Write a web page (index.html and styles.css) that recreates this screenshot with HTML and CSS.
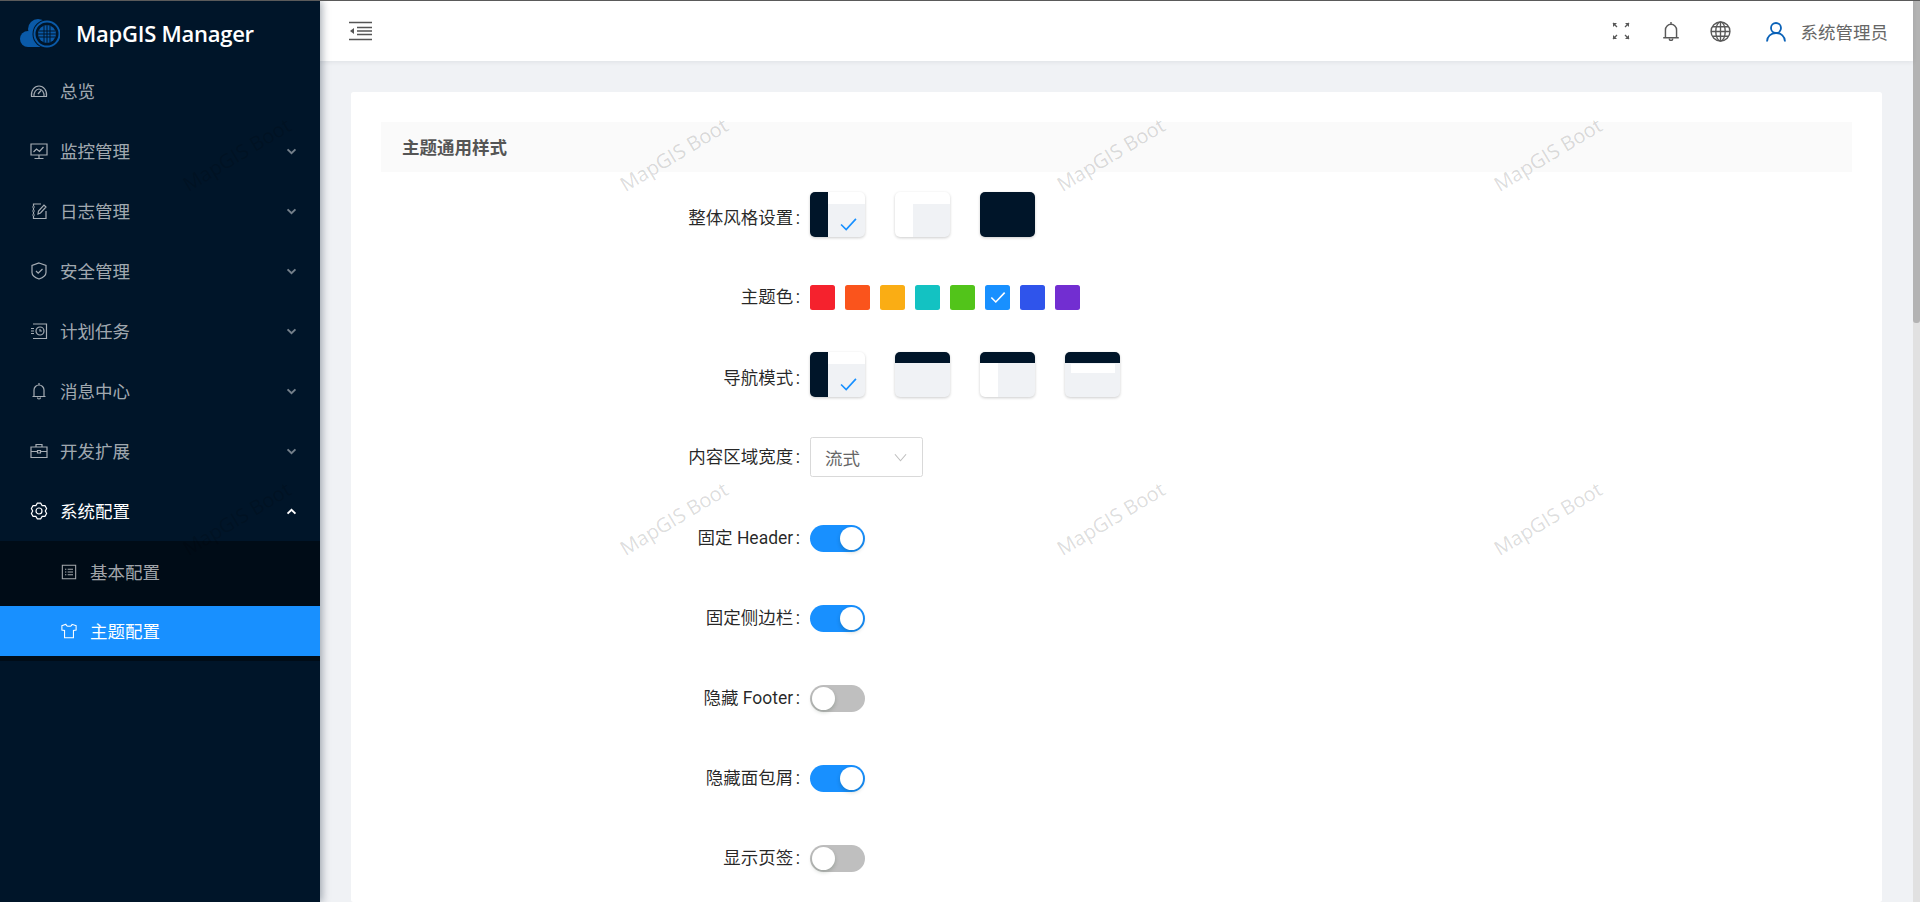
FILE: index.html
```html
<!DOCTYPE html>
<html lang="en">
<head>
    <meta charset="UTF-8">
    <meta name="viewport" content="width=device-width, initial-scale=1.0">
    <title>主题配置</title>
    <link rel="stylesheet" href="styles.css">
</head>
<body>
    <aside class="sidebar">
        <div class="logo">
            <svg class="logo-mark" viewBox="0 0 40 30">
                <circle cx="8" cy="20" r="8" fill="#0a5aa8"/>
                <circle cx="18" cy="10" r="10" fill="#0a5aa8"/>
                <rect x="8" y="14" width="20" height="14" fill="#0a5aa8"/>
                <circle cx="27" cy="15" r="14.5" fill="#001529"/>
                <circle cx="27" cy="15" r="12.5" fill="none" stroke="#0a5aa8" stroke-width="2"/>
                <circle cx="27" cy="15" r="9" fill="#0a5aa8"/>
                <path d="M18.5 12h17M18.5 18h17M24 6.500v17M30 6.500v17M27 6v18M18 15h18" stroke="#001529" stroke-width="1" fill="none"/>
            </svg>
            <span class="logo-text">MapGIS Manager</span>
        </div>
        <ul class="menu">
            <li class="menu-item">
                <svg class="icon" viewBox="0 0 18 18"><path d="M1.500 14.500C.6 8.500 4.500 4 9 4s8.400 4.500 7.500 10.500zM4 14.500C3.600 10.500 6 7 9 7s5.400 3.500 5 7.500M8 12l3-3.500"/></svg>
                <span>总览</span>
            </li>
            <li class="menu-item">
                <svg class="icon" viewBox="0 0 18 18"><path d="M1 2h16v11H1zM9 13v3.500M4.500 16.500h9M3.500 10l3-3 3 2.500 4-4.500"/></svg>
                <span>监控管理</span>
                <svg class="arrow" viewBox="0 0 12 8"><path d="M1.500 1.500 6 6l4.500-4.500"/></svg>
            </li>
            <li class="menu-item">
                <svg class="icon" viewBox="0 0 18 18"><path d="M11 2H3.500v2M3.500 6v2M3.500 10v2M3.500 14v2.500h12.500V9M8 12l.5-3L14 3l2 2-5.500 6zM2 5h3M2 9h3M2 13h3"/></svg>
                <span>日志管理</span>
                <svg class="arrow" viewBox="0 0 12 8"><path d="M1.500 1.500 6 6l4.500-4.500"/></svg>
            </li>
            <li class="menu-item">
                <svg class="icon" viewBox="0 0 18 18"><path d="M9 1l7 2.500v7C16 14 12 16 9 17c-3-1-7-3-7-6.500v-7zM6 9l2.200 2.200L12.500 7"/></svg>
                <span>安全管理</span>
                <svg class="arrow" viewBox="0 0 12 8"><path d="M1.500 1.500 6 6l4.500-4.500"/></svg>
            </li>
            <li class="menu-item">
                <svg class="icon" viewBox="0 0 18 18"><path d="M3 2h13.500v14.500H3M1 6.500h3M1 9h3M1 11.500h3"/><circle cx="10" cy="9" r="4"/><path d="M10 7v2h2"/></svg>
                <span>计划任务</span>
                <svg class="arrow" viewBox="0 0 12 8"><path d="M1.500 1.500 6 6l4.500-4.500"/></svg>
            </li>
            <li class="menu-item">
                <svg class="icon" viewBox="0 0 18 18"><path d="M2.500 14.500h13M4 14.500V8a5 5 0 0 1 10 0v6.500M9 1v2M7.500 15.500a1.500 1.500 0 0 0 3 0"/></svg>
                <span>消息中心</span>
                <svg class="arrow" viewBox="0 0 12 8"><path d="M1.500 1.500 6 6l4.500-4.500"/></svg>
            </li>
            <li class="menu-item">
                <svg class="icon" viewBox="0 0 18 18"><path d="M1 5h16v10.500H1zM6 5V2.500h6V5M1 9.500h6.500M10.500 9.500H17M7.500 8.500h3v2.500h-3z"/></svg>
                <span>开发扩展</span>
                <svg class="arrow" viewBox="0 0 12 8"><path d="M1.500 1.500 6 6l4.500-4.500"/></svg>
            </li>
            <li class="menu-item menu-open">
                <svg class="icon" viewBox="0 0 18 18"><path d="M7.340 1.170h3.320l1.490 2.370 2.800.11 1.660 2.880L15.300 9l1.310 2.470-1.660 2.880-2.800.11-1.490 2.370H7.340l-1.490-2.370-2.800-.11-1.660-2.880L2.700 9 1.390 6.530l1.660-2.880 2.800-.11z"/><circle cx="9" cy="9" r="3"/></svg>
                <span>系统配置</span>
                <svg class="arrow" viewBox="0 0 12 8"><path d="M1.500 6.500 6 2l4.500 4.500"/></svg>
            </li>
        </ul>
        <ul class="submenu">
            <li class="submenu-item">
                <svg class="icon" viewBox="0 0 18 18"><path d="M1.500 1.500h15v15h-15zM7.500 6h6M7.500 9h6M7.500 12h6M4.500 6h1.500M4.500 9h1.500M4.500 12h1.500"/></svg>
                <span>基本配置</span>
            </li>
            <li class="submenu-item submenu-active">
                <svg class="icon" viewBox="0 0 18 18"><path d="M5.500 1.500 1 3v5l3 .5v8h10v-8l3-.5V3l-4.500-1.500C12 4.500 6 4.500 5.500 1.500z"/></svg>
                <span>主题配置</span>
            </li>
        </ul>
    </aside>

    <div class="main">
        <header class="topbar">
            <svg class="fold" viewBox="0 0 24 20"><path d="M0 1.500h23M0 18.500h23M8 6.500h15M8 10h15M8 13.500h15"/><path class="fold-tip" d="M5 7v6l-4-3z"/></svg>
            <div class="topbar-right">
                <svg class="top-icon" viewBox="0 0 18 18"><path d="M1 1l4 4M17 1l-4 4M1 17l4-4M17 17l-4-4"/><path class="solid" d="M1 1h4L1 5zM17 1h-4l4 4zM1 17h4l-4-4zM17 17h-4l4-4z"/></svg>
                <svg class="top-icon bell" viewBox="0 0 18 18"><path d="M2 15h14M4 15V8a5 5 0 0 1 10 0v7M9 1v2M7.500 16a1.500 1.500 0 0 0 3 0"/></svg>
                <svg class="top-icon globe" viewBox="0 0 20 20"><circle cx="10" cy="10" r="9"/><ellipse cx="10" cy="10" rx="4.500" ry="9"/><path d="M10 1v18M1 10h18M2.200 5.500h15.600M2.200 14.500h15.600"/></svg>
                <div class="user">
                    <svg class="user-icon" viewBox="0 0 20 20"><circle cx="10" cy="6.500" r="5"/><path d="M1 20c0-5 4-8.500 9-8.500s9 3.500 9 8.500"/></svg>
                    <span>系统管理员</span>
                </div>
            </div>
        </header>
        <main class="content">
            <section class="card">
                <h2 class="section-title">主题通用样式</h2>

                <div class="form-row row-style">
                    <label class="form-label form-label-low">整体风格设置</label>
                    <div class="thumbs">
                        <div class="thumb thumb-side-dark"><svg class="thumb-check" viewBox="0 0 18 14"><path d="M1 7l5.500 5.500L17 1"/></svg></div>
                        <div class="thumb thumb-side-light"></div>
                        <div class="thumb thumb-dark"></div>
                    </div>
                </div>

                <div class="form-row row-color">
                    <label class="form-label">主题色</label>
                    <div class="swatches">
                        <span class="swatch" style="background:#f5222d"></span>
                        <span class="swatch" style="background:#fa541c"></span>
                        <span class="swatch" style="background:#faad14"></span>
                        <span class="swatch" style="background:#13c2c2"></span>
                        <span class="swatch" style="background:#52c41a"></span>
                        <span class="swatch" style="background:#1890ff"><svg viewBox="0 0 18 14"><path d="M1.500 7l5 5L16.500 1.500"/></svg></span>
                        <span class="swatch" style="background:#2f54eb"></span>
                        <span class="swatch" style="background:#722ed1"></span>
                    </div>
                </div>

                <div class="form-row row-nav">
                    <label class="form-label form-label-low">导航模式</label>
                    <div class="thumbs">
                        <div class="thumb thumb-side-dark"><svg class="thumb-check" viewBox="0 0 18 14"><path d="M1 7l5.500 5.500L17 1"/></svg></div>
                        <div class="thumb thumb-top"></div>
                        <div class="thumb thumb-top thumb-mix"></div>
                        <div class="thumb thumb-top thumb-inner"></div>
                    </div>
                </div>

                <div class="form-row row-select">
                    <label class="form-label">内容区域宽度</label>
                    <div class="select">
                        <span>流式</span>
                        <svg viewBox="0 0 14 9"><path d="M1 1l6 7 6-7"/></svg>
                    </div>
                </div>

                <div class="form-row row-switch">
                    <label class="form-label">固定 Header</label>
                    <span class="switch switch-on"></span>
                </div>
                <div class="form-row row-switch">
                    <label class="form-label">固定侧边栏</label>
                    <span class="switch switch-on"></span>
                </div>
                <div class="form-row row-switch">
                    <label class="form-label">隐藏 Footer</label>
                    <span class="switch"></span>
                </div>
                <div class="form-row row-switch">
                    <label class="form-label">隐藏面包屑</label>
                    <span class="switch switch-on"></span>
                </div>
                <div class="form-row row-switch">
                    <label class="form-label">显示页签</label>
                    <span class="switch"></span>
                </div>
            </section>
        </main>
    </div>

    <div class="scrollbar"><div class="scrollbar-thumb"></div></div>

    <div class="watermarks">
        <span>MapGIS Boot</span><span>MapGIS Boot</span><span>MapGIS Boot</span><span>MapGIS Boot</span>
        <span>MapGIS Boot</span><span>MapGIS Boot</span><span>MapGIS Boot</span><span>MapGIS Boot</span>
    </div>
</body>
</html>
```

FILE: styles.css
```css
html, body {
    height: 100%;
}

body {
    font-family: Roboto, 'Noto Sans CJK SC', sans-serif;
    font-size: 17.5px;
    color: rgba(0, 0, 0, 0.85);
    background-color: #f0f2f5;
    margin: 0;
    border-top: 1px solid #5a5a5a;
    box-sizing: border-box;
    display: flex;
    overflow: hidden;
    position: relative;
}

ul {
    list-style: none;
    margin: 0;
    padding: 0;
}

/* sidebar */
.sidebar {
    width: 320px;
    flex-shrink: 0;
    background-color: #001529;
    color: rgba(255, 255, 255, 0.65);
    box-shadow: 2px 0 8px rgba(0, 21, 41, 0.35);
    position: relative;
    z-index: 2;
}

.logo {
    height: 60px;
    display: flex;
    align-items: center;
    padding-left: 20px;
}

.logo-mark {
    width: 40px;
    height: 30px;
    margin-right: 16px;
    margin-top: 5px;
}

.logo-text {
    color: #fff;
    font-family: 'Open Sans', sans-serif;
    font-size: 22px;
    font-weight: 600;
    letter-spacing: -0.25px;
    margin-top: 3px;
}

.menu-item {
    height: 60px;
    display: flex;
    align-items: center;
    padding-left: 30px;
    padding-right: 23px;
}

.menu-item span,
.submenu-item span {
    margin-top: -2px;
}

.menu-open {
    color: #fff;
}

.icon {
    width: 18px;
    height: 18px;
    margin-right: 12px;
    flex-shrink: 0;
    fill: none;
    stroke: currentColor;
    stroke-width: 1.2;
}

.arrow {
    width: 11px;
    height: 7px;
    margin-left: auto;
    fill: none;
    stroke: currentColor;
    stroke-width: 2.2;
    opacity: 0.7;
}

.menu-open .arrow {
    opacity: 1;
}

.submenu {
    background-color: #000c17;
    padding: 6px 0 5px;
}

.submenu-item {
    height: 50px;
    display: flex;
    align-items: center;
    padding-left: 61px;
}

.submenu-item .icon {
    width: 16px;
    height: 16px;
    margin-right: 13px;
}

.submenu-active {
    background-color: #1890ff;
    color: #fff;
    margin-top: 9px;
}

/* header */
.main {
    flex: 1;
    min-width: 0;
    display: flex;
    flex-direction: column;
}

.topbar {
    height: 60px;
    flex-shrink: 0;
    background-color: #fff;
    box-shadow: 0 1px 5px rgba(0, 21, 41, 0.08);
    display: flex;
    align-items: center;
    justify-content: space-between;
    padding: 0 25px 0 29px;
    position: relative;
    z-index: 1;
    box-sizing: border-box;
}

.fold {
    width: 24px;
    height: 20px;
    fill: none;
    stroke: #555;
    stroke-width: 1.5;
}

.fold-tip {
    fill: #555;
    stroke: none;
}

.topbar-right {
    display: flex;
    align-items: center;
}

.top-icon {
    width: 18px;
    height: 18px;
    margin-right: 31px;
    fill: none;
    stroke: #595959;
    stroke-width: 1.3;
}

.top-icon .solid {
    fill: #595959;
    stroke: none;
}

.bell {
    width: 20px;
    height: 20px;
    margin-right: 29.5px;
}

.globe {
    width: 21px;
    height: 21px;
    margin-right: 34.5px;
}

.user {
    display: flex;
    align-items: center;
    color: #666;
}

.user-icon {
    width: 20px;
    height: 21px;
    margin-right: 15px;
    fill: none;
    stroke: #0a62b8;
    stroke-width: 1.8;
}

/* content */
.content {
    flex: 1;
    padding: 31px 31px 0;
    min-height: 0;
}

.card {
    background-color: #fff;
    border-radius: 2.5px;
    padding: 30px 30px 0;
    height: 100%;
    box-sizing: border-box;
}

.section-title {
    height: 50px;
    line-height: 52px;
    background-color: #fafafa;
    margin: 0 0 20px;
    padding-left: 21px;
    font-size: 17.5px;
    font-weight: bold;
    color: #555;
}

.form-row {
    display: grid;
    grid-template-columns: 429px 1fr;
    align-items: center;
}

.row-style { margin-bottom: 47px; }
.row-color { margin-bottom: 41px; }
.row-nav { margin-bottom: 40px; }
.row-select { margin-bottom: 48px; }
.row-switch { margin-bottom: 53px; }

.form-label {
    text-align: right;
    line-height: 27px;
}

.form-label::after {
    content: ":";
    margin: 0 10px 0 2.5px;
}

.form-label-low {
    padding-top: 7px;
}

.thumbs {
    display: flex;
    gap: 30px;
}

.thumb {
    width: 55px;
    height: 45px;
    border-radius: 5px;
    background-color: #f0f2f5;
    box-shadow: 0 1px 3px rgba(0, 0, 0, 0.2);
    position: relative;
    overflow: hidden;
}

.thumb-side-dark {
    background-image:
        linear-gradient(#001529, #001529),
        linear-gradient(#fff, #fff);
    background-size: 18px 100%, 100% 12px;
    background-repeat: no-repeat;
}

.thumb-side-light {
    background-image:
        linear-gradient(#fff, #fff),
        linear-gradient(#fff, #fff);
    background-size: 18px 100%, 100% 12px;
    background-repeat: no-repeat;
}

.thumb-dark {
    background-color: #001529;
}

.thumb-top {
    background-image: linear-gradient(#001529, #001529);
    background-size: 100% 11px;
    background-repeat: no-repeat;
}

.thumb-mix {
    background-image:
        linear-gradient(#001529, #001529),
        linear-gradient(#fff, #fff);
    background-size: 100% 11px, 18px 100%;
    background-repeat: no-repeat;
}

.thumb-inner {
    background-image:
        linear-gradient(#001529, #001529),
        linear-gradient(#fff, #fff);
    background-size: 100% 11px, 44px 9px;
    background-position: 0 0, 6px 12px;
    background-repeat: no-repeat;
}

.thumb-check {
    width: 17px;
    height: 13px;
    position: absolute;
    left: 30px;
    top: 26px;
    fill: none;
    stroke: #1890ff;
    stroke-width: 1.8;
}

.swatches {
    display: flex;
    gap: 10px;
}

.swatch {
    width: 25px;
    height: 25px;
    border-radius: 2.5px;
    display: flex;
    align-items: center;
    justify-content: center;
}

.swatch svg {
    width: 16px;
    height: 13px;
    fill: none;
    stroke: #fff;
    stroke-width: 1.8;
}

.select {
    width: 113px;
    height: 40px;
    box-sizing: border-box;
    border: 1px solid #d9d9d9;
    border-radius: 2.5px;
    display: flex;
    align-items: center;
    justify-content: space-between;
    padding: 0 15px 0 14px;
    color: #666;
}

.select svg {
    width: 13px;
    height: 9px;
    fill: none;
    stroke: #bfbfbf;
    stroke-width: 1.2;
}

.switch {
    width: 55px;
    height: 27px;
    border-radius: 14px;
    background-color: #bfbfbf;
    display: flex;
    align-items: center;
    padding: 0 2px;
    box-sizing: border-box;
}

.switch::after {
    content: "";
    width: 23px;
    height: 23px;
    border-radius: 50%;
    background-color: #fff;
    box-shadow: 0 2px 4px rgba(0, 35, 11, 0.2);
}

.switch-on {
    background-color: #1890ff;
    justify-content: flex-end;
}

/* fake scrollbar, the page itself doesn't scroll in the shot */
.scrollbar {
    width: 7px;
    flex-shrink: 0;
    background-color: #e1e1e1;
}

.scrollbar-thumb {
    height: 322px;
    background-color: #b3b3b3;
    border-radius: 0 0 3px 3px;
}

/* watermark layer */
.watermarks {
    position: absolute;
    left: 18px;
    top: -29px;
    display: grid;
    grid-template-columns: repeat(4, 437px);
    grid-auto-rows: 364px;
    pointer-events: none;
    z-index: 5;
}

.watermarks span {
    display: flex;
    align-items: center;
    justify-content: center;
    font-family: 'Open Sans', sans-serif;
    font-size: 20px;
    color: rgba(0, 0, 0, 0.15);
    transform: rotate(-31deg);
}
```
